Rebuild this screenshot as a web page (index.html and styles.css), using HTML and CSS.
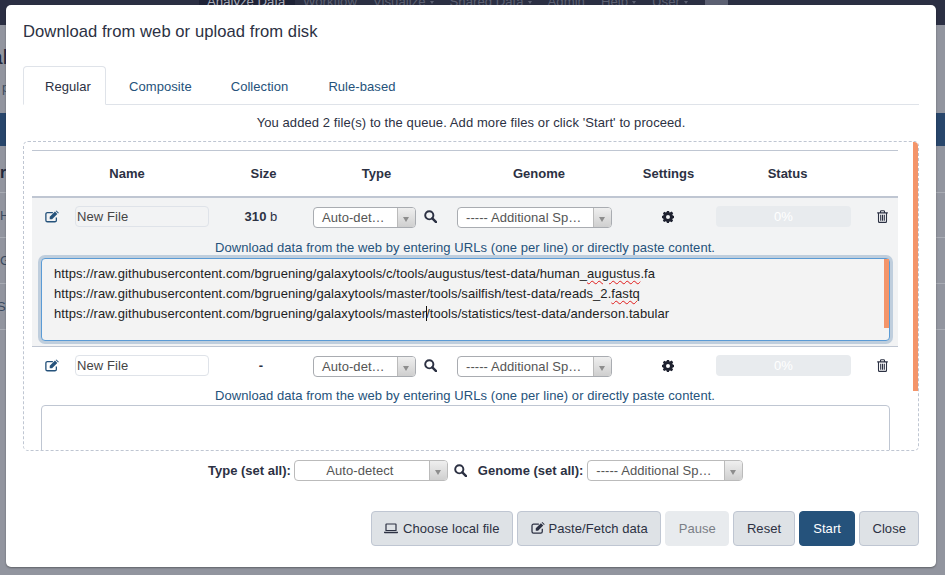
FILE: index.html
```html
<!DOCTYPE html>
<html lang="en">
<head>
<meta charset="utf-8">
<title>Download from web or upload from disk</title>
<link rel="stylesheet" href="styles.css">
</head>
<body>
<svg class="sprites" aria-hidden="true">
  <symbol id="i-edit" viewBox="0 0 16 14"><path d="M13 8v3.2A1.8 1.8 0 0 1 11.2 13H2.8A1.8 1.8 0 0 1 1 11.2V4.3a1.8 1.8 0 0 1 1.8-1.8H9" fill="none" stroke="currentColor" stroke-width="1.5"/><path d="M5.4 7.4 11.4 1.4l2.7 2.7-6 6H5.4z M12.2.6l.8-.6 2.8 2.7-.8.8z" fill="currentColor"/></symbol>
  <symbol id="i-search" viewBox="0 0 14 14"><circle cx="5.7" cy="5.7" r="4.4" fill="none" stroke="currentColor" stroke-width="2.1"/><path d="M9 9l4 4" stroke="currentColor" stroke-width="2.6" stroke-linecap="round"/></symbol>
  <symbol id="i-cog" viewBox="0 0 12 12"><path fill-rule="evenodd" fill="currentColor" d="M4.900 0h2.200l.3 1.600 1-.4 1.300-.6 1.500 1.600-.9 1.300.5 1 1.200.4v2.200l-1.300.3-.4 1 .8 1.300-1.600 1.500-1.300-.8-1 .4-.3 1.200H4.900l-.3-1.300-1-.4-1.300.8L.8 9.700l.8-1.300-.4-1L0 7.100V4.900l1.300-.3.4-1-.8-1.300L2.400.7l1.300.8 1-.4z M6 4a2 2 0 1 0 0 4 2 2 0 0 0 0-4z"/></symbol>
  <symbol id="i-trash" viewBox="0 0 11 13"><path d="M.2 2.900h10.600M3.500 2.900V1.600q0-.9.900-.9h2.200q.9 0 .9.9v1.300M1.500 2.900v8.500q0 1 1 1h6q1 0 1-1V2.900" fill="none" stroke="currentColor" stroke-width="1.100"/><path d="M3.700 4.800v5.900M5.500 4.800v5.900M7.300 4.800v5.900" stroke="currentColor" stroke-width="1.100"/></symbol>
  <symbol id="i-laptop" viewBox="0 0 14 11"><path d="M2.500 1h9q.5 0 .5.5V7.500H2V1.500q0-.5.5-.5z" fill="none" stroke="currentColor" stroke-width="1.200"/><path d="M0 8.800h14V9.500q0 .7-.7.7H.7Q0 10.200 0 9.500z" fill="currentColor"/></symbol>
</svg>

<div class="page">
  <nav class="navbar">
    <span class="nav-item active">Analyze Data</span>
    <span class="nav-item">Workflow</span>
    <span class="nav-item caret-item">Visualize</span>
    <span class="nav-item caret-item">Shared Data</span>
    <span class="nav-item">Admin</span>
    <span class="nav-item caret-item">Help</span>
    <span class="nav-item caret-item">User</span>
    <span class="nav-grid"></span>
  </nav>
  <div class="bg-title">al</div>
  <div class="bg-para">p</div>
  <div class="bg-band"></div>
  <div class="bg-head">r</div>
  <div class="bg-row first">Hi</div>
  <div class="bg-row">Ga</div>
  <div class="bg-row last">So</div>
</div>

<div class="modal" role="dialog">
  <h1 class="modal-title">Download from web or upload from disk</h1>

  <ul class="tabs">
    <li class="tab active">Regular</li>
    <li class="tab">Composite</li>
    <li class="tab">Collection</li>
    <li class="tab">Rule-based</li>
  </ul>

  <p class="queue-msg">You added 2 file(s) to the queue. Add more files or click 'Start' to proceed.</p>

  <div class="dropbox">
    <div class="scrollbar-outer"></div>
    <div class="list">
      <div class="cols head">
        <div></div><div>Name</div><div>Size</div><div>Type</div><div>Genome</div><div>Settings</div><div>Status</div><div></div>
      </div>

      <section class="file filled">
        <div class="cols">
          <div class="cell"><svg class="ic-edit"><use href="#i-edit"/></svg></div>
          <div class="cell"><div class="name-input">New File</div></div>
          <div class="cell size"><b>310</b>&nbsp;b</div>
          <div class="cell type-cell">
            <div class="select sel-type"><span class="sel-text">Auto-det…</span><span class="sel-arrow"></span></div>
            <svg class="ic-search"><use href="#i-search"/></svg>
          </div>
          <div class="cell"><div class="select sel-genome"><span class="sel-text">----- Additional Sp…</span><span class="sel-arrow"></span></div></div>
          <div class="cell"><svg class="ic-cog"><use href="#i-cog"/></svg></div>
          <div class="cell"><div class="progress">0%</div></div>
          <div class="cell"><svg class="ic-trash"><use href="#i-trash"/></svg></div>
        </div>
        <p class="hint">Download data from the web by entering URLs (one per line) or directly paste content.</p>
        <div class="paste focused">
          <div class="scrollbar-inner"></div>
          <div>https://raw.githubusercontent.com/bgruening/galaxytools/c/tools/augustus/test-data/human_<span class="typo">augustus</span>.fa</div>
          <div>https://raw.githubusercontent.com/bgruening/galaxytools/master/tools/sailfish/test-data/reads_2.<span class="typo">fastq</span></div>
          <div>https://raw.githubusercontent.com/bgruening/galaxytools/master<span class="caret"></span>/tools/statistics/test-data/anderson.tabular</div>
        </div>
      </section>

      <section class="file">
        <div class="cols">
          <div class="cell"><svg class="ic-edit"><use href="#i-edit"/></svg></div>
          <div class="cell"><div class="name-input">New File</div></div>
          <div class="cell size"><b>-</b></div>
          <div class="cell type-cell">
            <div class="select sel-type"><span class="sel-text">Auto-det…</span><span class="sel-arrow"></span></div>
            <svg class="ic-search"><use href="#i-search"/></svg>
          </div>
          <div class="cell"><div class="select sel-genome"><span class="sel-text">----- Additional Sp…</span><span class="sel-arrow"></span></div></div>
          <div class="cell"><svg class="ic-cog"><use href="#i-cog"/></svg></div>
          <div class="cell"><div class="progress">0%</div></div>
          <div class="cell"><svg class="ic-trash"><use href="#i-trash"/></svg></div>
        </div>
        <p class="hint">Download data from the web by entering URLs (one per line) or directly paste content.</p>
        <div class="paste"></div>
      </section>
    </div>
  </div>

  <div class="set-all">
    <b class="set-label">Type (set all):</b>
    <div class="select sel-all-type"><span class="sel-text center">Auto-detect</span><span class="sel-arrow"></span></div>
    <svg class="ic-search"><use href="#i-search"/></svg>
    <b class="set-label genome">Genome (set all):</b>
    <div class="select sel-all-genome"><span class="sel-text">----- Additional Sp…</span><span class="sel-arrow"></span></div>
  </div>

  <div class="actions">
    <button class="btn"><svg class="ic-laptop"><use href="#i-laptop"/></svg>Choose local file</button>
    <button class="btn"><svg class="ic-btn-edit"><use href="#i-edit"/></svg>Paste/Fetch data</button>
    <button class="btn disabled">Pause</button>
    <button class="btn">Reset</button>
    <button class="btn primary">Start</button>
    <button class="btn last">Close</button>
  </div>
</div>
</body>
</html>
```

FILE: styles.css
```css
* { box-sizing: border-box; }
html, body { margin: 0; height: 100%; }
body {
  width: 945px;
  height: 575px;
  overflow: hidden;
  position: relative;
  font-family: "Liberation Sans", Arial, sans-serif;
  font-size: 13px;
  line-height: 20px;
  letter-spacing: .06px;
  color: #2c3143;
  background: #92959f;
}
.sprites { display: none; }

/* dimmed page behind the dialog */
.page { height: 575px; color: #23283a; overflow: hidden; }
.navbar {
  height: 25px;
  background: #2b2f43;
  display: flex;
  padding-left: 199px;
  color: #5c6072;
  font-size: 13.2px;
  letter-spacing: 0;
  overflow: hidden;
}
.nav-item { padding: 0 8px; height: 5px; line-height: 4px; white-space: nowrap; }
.nav-item.active { width: 96px; background: #1e2236; color: #a9abb6; }
.caret-item::after {
  content: "";
  display: inline-block;
  margin-left: 4px;
  border: 2px solid transparent;
  border-top: 3px solid #5c6072;
  border-bottom: 0;
  vertical-align: 2px;
}
.nav-grid { width: 23px; height: 5px; background: #5c6072; margin-left: 9px; }
.bg-title { font-size: 21px; line-height: 30px; margin-top: 17px; text-indent: -9px; }
.bg-para { margin-top: 6px; text-indent: 2px; color: #3a4a60; }
.bg-band { height: 33px; margin-top: 15px; background: #28466b; }
.bg-head { font-size: 16px; font-weight: 700; line-height: 24px; padding-top: 15px; height: 46px; }
.bg-row {
  height: 46px;
  border-top: 1px solid #a9acb4;
  line-height: 45px;
  color: #3a4a60;
}
.bg-row.first { height: 45px; }
.bg-row.last { border-bottom: 1px solid #a9acb4; height: 47px; text-indent: -3px; }

/* dialog */
.modal {
  position: absolute;
  left: 6px;
  top: 5px;
  width: 930px;
  height: 562px;
  background: #fff;
  border-radius: 5px;
  padding: 0 17px;
  box-shadow: 0 1px 2px rgba(0, 0, 0, .35);
}
.modal-title {
  margin: 0;
  padding-top: 17px;
  height: 61px;
  font-size: 16.6px;
  font-weight: 400;
  line-height: 20px;
  color: #2c3143;
}

.tabs {
  display: flex;
  margin: 0;
  padding: 0;
  list-style: none;
  height: 39px;
  border-bottom: 1px solid #dfe3e9;
}
.tab {
  height: 39px;
  padding: 10px 18px 0 21px;
  margin-right: 1px;
  color: #25527b;
  border: 1px solid transparent;
  border-radius: 4px 4px 0 0;
}
.tab:nth-child(2) { padding: 10px 19px 0 21px; }
.tab:nth-child(3) { padding: 10px 19px 0 17px; }
.tab:nth-child(4) { padding: 10px 0 0 18px; }
.tab.active {
  width: 83px;
  color: #2c3143;
  border-color: #dfe3e9;
  border-bottom-color: #fff;
  background: #fff;
}

.queue-msg { margin: 8px 0 8px; text-align: center; height: 20px; color: #2c3143; letter-spacing: .085px; }

.dropbox {
  position: relative;
  height: 310px;
  border: 1px dashed #bfc6d2;
  border-radius: 5px;
  padding: 8px 0 0 8px;
  overflow: hidden;
}
.scrollbar-outer {
  position: absolute;
  right: 0;
  top: 0;
  width: 5px;
  height: 249px;
  background: #f4956a;
  z-index: 2;
}
.list { width: 866px; }

.cols {
  display: grid;
  grid-template-columns: 43px 143px 95px 144px 166px 93px 161px 21px;
}
.head {
  height: 48px;
  align-items: center;
  text-align: center;
  font-weight: 700;
  letter-spacing: 0;
  color: #2c3143;
  border-top: 1px solid #bfc6d2;
  border-bottom: 2px solid #bfc6d2;
  padding: 1px 0 1px;
}
.head > div:nth-child(2) { padding-right: 39px; }
.head > div:nth-child(3) { padding-right: 4px; }
.head > div:nth-child(4) { padding-right: 17px; }
.head > div:nth-child(5) { padding-right: 2px; }
.head > div:nth-child(6) { padding-right: 2px; }
.head > div:nth-child(7) { padding-right: 18px; }

.file { height: 149px; padding-top: 8px; border-bottom: 1px solid #bfc6d2; }
.file.filled { background: #f2f3f4; }
.file:not(.filled) { height: 200px; border-bottom: 0; }

.cell { display: flex; align-items: center; height: 21px; }
.cols > .cell:nth-child(1) { padding-left: 13px; }
.cols > .cell:nth-child(3) { justify-content: center; padding-right: 9px; color: #2c3143; }
.cols > .cell:nth-child(6) { justify-content: center; padding-right: 3px; }

.ic-edit { width: 14px; height: 13px; color: #25527b; }
.ic-search { width: 13px; height: 13px; color: #2c3143; margin-left: 8px; flex: none; }
.ic-cog { width: 12px; height: 12px; color: #1f2230; }
.ic-trash { width: 11px; height: 13px; color: #2c3143; }
.ic-laptop { width: 14px; height: 11px; margin-right: 5px; vertical-align: -1px; }
.ic-btn-edit { width: 14px; height: 12px; margin-right: 4px; vertical-align: -1px; color: #2c3143; }

.name-input {
  width: 134px;
  height: 21px;
  line-height: 20px;
  padding-left: 1px;
  border: 1px solid #dfe3e9;
  border-radius: 4px;
  color: #444;
  letter-spacing: .1px;
}
.select {
  display: flex;
  height: 21px;
  background: #fff;
  border: 1px solid #a9acb1;
  border-radius: 4px;
  color: #555;
  line-height: 19px;
  overflow: hidden;
}
.cell .select { margin-top: 2px; }
.sel-type { width: 103px; flex: none; }
.sel-genome { width: 155px; }
.sel-all-type { width: 154px; border-color: #bbb; }
.sel-all-genome { width: 156px; border-color: #bbb; }
.sel-text { flex: 1; padding-left: 8px; white-space: nowrap; overflow: hidden; }
.sel-text.center { text-align: center; padding-left: 0; padding-right: 4px; }
.sel-arrow {
  width: 18px;
  flex: none;
  border-left: 1px solid #bbb;
  background: linear-gradient(#efefef, #cfcfcf);
  position: relative;
}
.sel-arrow::after {
  content: "";
  position: absolute;
  left: 5px;
  top: 9px;
  border: 3px solid transparent;
  border-top: 5px solid #8d8d8d;
  border-bottom: 0;
}
.progress {
  width: 135px;
  height: 21px;
  background: #e8ebee;
  border-radius: 4px;
  text-align: center;
  color: #fff;
  line-height: 21px;
}

.hint { margin: 10px 0 0; height: 19px; text-align: center; color: #25527b; }
.filled .hint { margin-top: 11px; height: 20px; }
.paste {
  position: relative;
  width: 849px;
  height: 100px;
  margin: 0 0 0 9px;
  padding: 5px 12px;
  border: 1px solid #bfc6d2;
  border-radius: 4px;
  color: #222;
  background: #fff;
  white-space: nowrap;
  letter-spacing: .07px;
}
.paste.focused {
  height: 83px;
  padding: 5px 12px;
  background: #f3f3f3;
  border-color: #5b9bd5;
  box-shadow: 0 0 0 3px #bfcedd;
}
.scrollbar-inner {
  position: absolute;
  right: 0;
  top: 0;
  width: 5px;
  height: 69px;
  background: #f4956a;
}
.typo { text-decoration: underline wavy #e01b1b 1px; text-underline-offset: 2px; }
.caret {
  display: inline-block;
  width: 1px;
  height: 15px;
  margin: 0 -1px 0 0;
  background: #111;
  vertical-align: -3px;
}

.set-all {
  display: flex;
  align-items: center;
  height: 21px;
  margin-top: 9px;
  padding-left: 185px;
  color: #2c3143;
}
.set-all .ic-search { margin-left: 6px; }
.set-label { margin-right: 3px; letter-spacing: 0; }
.set-label.genome { margin-left: 11px; margin-right: 4px; }

.actions {
  display: flex;
  justify-content: flex-end;
  gap: 4px;
  margin-top: 30px;
}
.btn {
  height: 35px;
  padding: 0 12.5px;
  font: inherit;
  letter-spacing: inherit;
  color: #2c3143;
  background: #dee2e6;
  border: 1px solid #bfc6d2;
  border-radius: 4px;
  white-space: nowrap;
}
.btn.last { padding: 0 12px; }
.btn.disabled { color: #7b7f87; background: #e8ebee; border-color: #e8ebee; }
.btn.primary { padding: 0 13.5px; color: #fff; background: #25527b; border-color: #25527b; }
```
